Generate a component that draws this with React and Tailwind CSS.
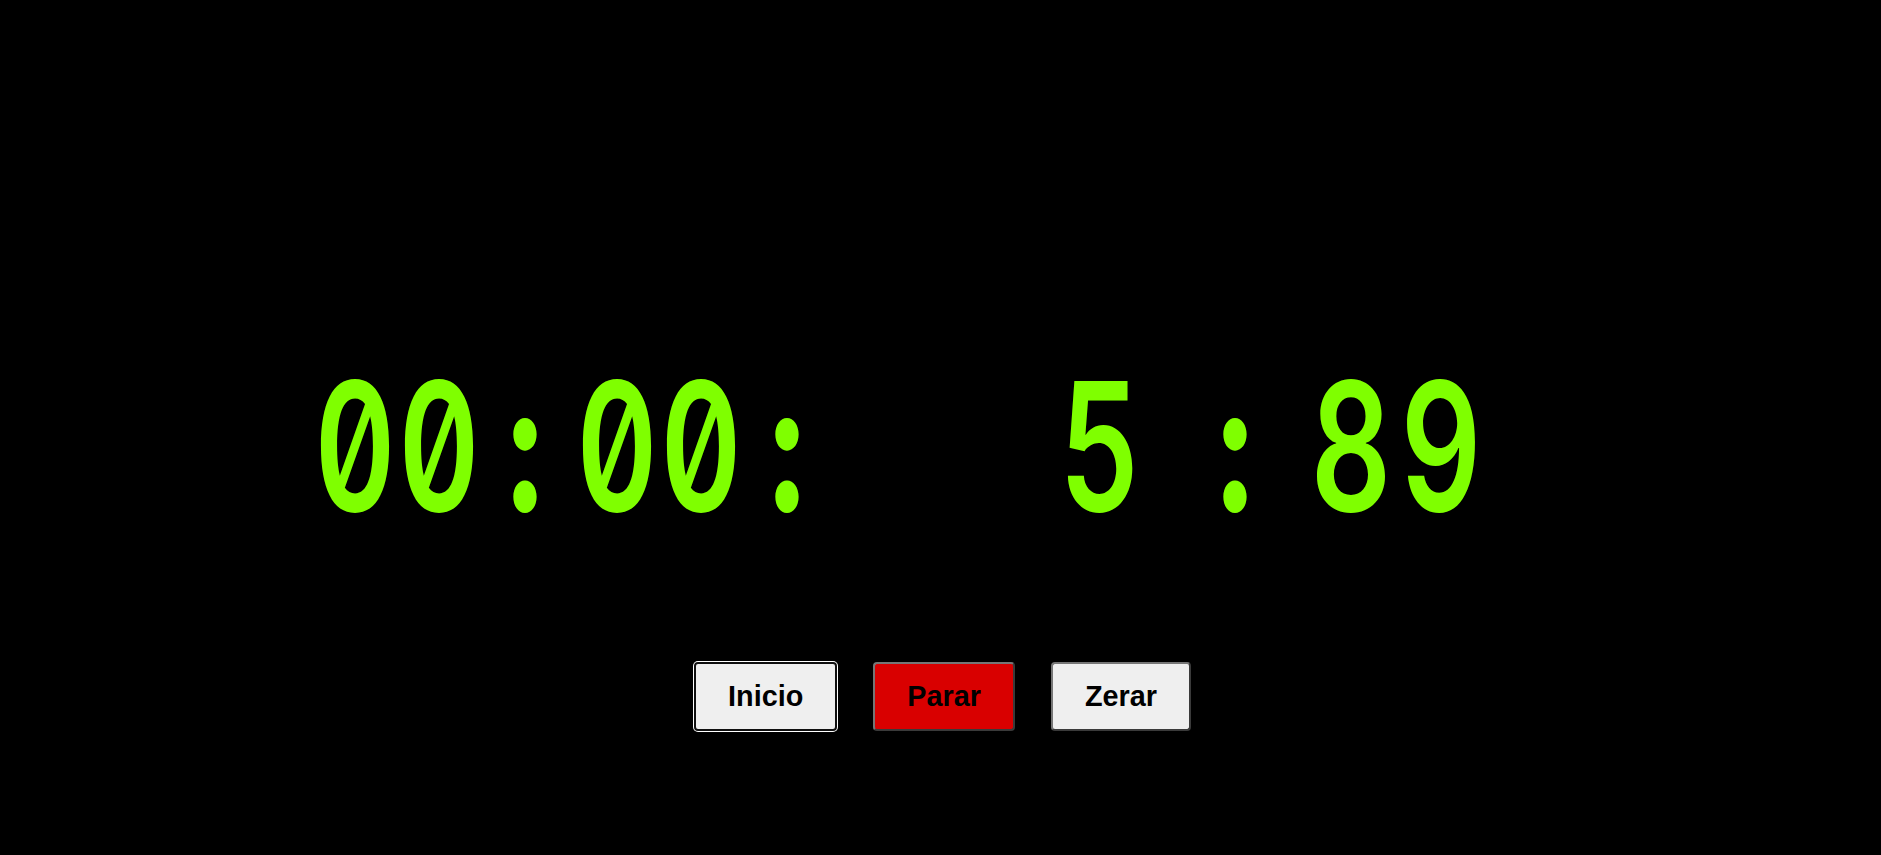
import React from "react";

const mono = { fontFamily: 'Inter, "DejaVu Sans", sans-serif', fontFeatureSettings: '"zero" 1, "tnum" 1' };

function G({ ch, cls = "" }) {
  return (
    <span className={"inline-flex justify-center w-[84px] min-w-0 shrink-0 " + cls}>{ch}</span>
  );
}

export default function App() {
  return (
    <div className="w-full h-[855px] bg-black flex flex-col overflow-hidden">
      <div
        className="mt-[382px] h-[125px] pl-[313px] flex items-center text-[126px] leading-none font-semibold slashed-zero tabular-nums text-[#7fff00] scale-y-[1.42] origin-center"
        style={mono}
      >
        <G ch="0" />
        <G ch="0" />
        <G ch=":" cls="ml-[2px] font-extrabold" />
        <G ch="0" cls="ml-[8px]" />
        <G ch="0" />
        <G ch=":" cls="ml-[2px] font-extrabold" />
        <G ch="5" cls="ml-[229px]" />
        <G ch=":" cls="ml-[51px] font-extrabold" />
        <G ch="8" cls="ml-[32px]" />
        <G ch="9" cls="ml-[6px]" />
      </div>
      <div
        className="mt-[155px] flex justify-center items-start gap-[36px] pl-[4px]"
        style={{ fontFamily: '"Liberation Sans", Arial, sans-serif' }}
      >
        <button className="px-[32px] py-[16px] bg-[#efefef] text-black font-bold text-[28.8px] leading-[33px] border-2 border-[#101010] rounded-[4px] shadow-[0_0_0_1px_#ffffff]">
          Inicio
        </button>
        <button className="px-[32px] py-[16px] bg-[#d90000] text-black font-bold text-[28.8px] leading-[33px] border-2 border-t-[#767676] border-l-[#767676] border-b-[#3a3a3a] border-r-[#3a3a3a] rounded-[4px]">
          Parar
        </button>
        <button className="px-[32px] py-[16px] bg-[#efefef] text-black font-bold text-[28.8px] leading-[33px] border-2 border-t-[#767676] border-l-[#767676] border-b-[#3a3a3a] border-r-[#3a3a3a] rounded-[4px]">
          Zerar
        </button>
      </div>
    </div>
  );
}
